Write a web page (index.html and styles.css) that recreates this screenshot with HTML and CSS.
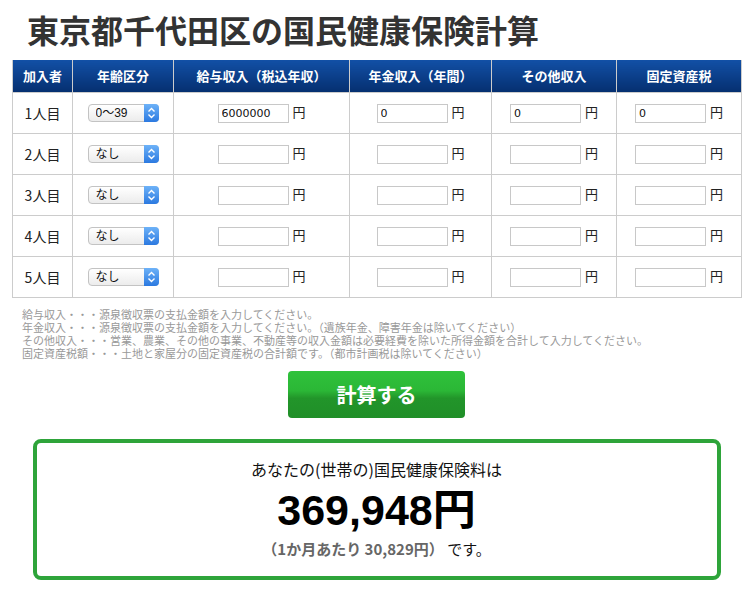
FILE: index.html
```html
<html>

<head>
    <meta http-equiv="Content-Type" content="text/html; charset=utf-8">
    <title>東京都千代田区の国民健康保険計算</title>

    <link rel="stylesheet" href="styles.css">
</head>

<body>
    <div class="wrap">
        <h1>東京都千代田区の国民健康保険計算</h1>

        <table class="calc">
            <colgroup>
                <col style="width: 60px">
                <col style="width: 101px">
                <col style="width: 176px">
                <col style="width: 142px">
                <col style="width: 125px">
                <col style="width: 125px">
            </colgroup>
            <thead>
                <tr>
                    <th>加入者</th>
                    <th>年齢区分</th>
                    <th>給与収入（税込年収）</th>
                    <th>年金収入（年間）</th>
                    <th>その他収入</th>
                    <th>固定資産税</th>
                </tr>
            </thead>
            <tbody id="rows"></tbody>
        </table>

        <div class="notes">
            <span>給与収入・・・源泉徴収票の支払金額を入力してください。</span>
            <span>年金収入・・・源泉徴収票の支払金額を入力してください。（遺族年金、障害年金は除いてください）</span>
            <span>その他収入・・・営業、農業、その他の事業、不動産等の収入金額は必要経費を除いた所得金額を合計して入力してください。</span>
            <span>固定資産税額・・・土地と家屋分の固定資産税の合計額です。（都市計画税は除いてください）</span>
        </div>

        <div class="action">
            <button class="btn-calc" onclick="calc()">計算する</button>
        </div>

        <div class="result">
            <p class="result-lead">あなたの(世帯の)国民健康保険料は</p>
            <p class="result-total"><span id="total">369,948</span>円</p>
            <p class="result-month"><b>（1か月あたり <span id="month">30,829</span>円）</b> です。</p>
        </div>
    </div>

    <script type="text/javascript">
        var members = [
            { age: '0〜39', salary: '6000000', pension: '0', other: '0', tax: '0' },
            { age: 'なし', salary: '', pension: '', other: '', tax: '' },
            { age: 'なし', salary: '', pension: '', other: '', tax: '' },
            { age: 'なし', salary: '', pension: '', other: '', tax: '' },
            { age: 'なし', salary: '', pension: '', other: '', tax: '' }
        ];

        var ages = ['なし', '0〜39', '40〜64', '65〜74'];

        // 円マークの付いた入力欄
        var yen = function (name, value) {
            return '<input type="text" class="num" name="' + name + '" value="' + value + '"> 円';
        };

        var html = '';
        for (var i = 0; i < members.length; i++) {
            var m = members[i];
            var opts = '';
            for (var j = 0; j < ages.length; j++) {
                opts += '<option' + (ages[j] == m.age ? ' selected' : '') + '>' + ages[j] + '</option>';
            }
            html += '<tr>'
                + '<td>' + (i + 1) + '人目</td>'
                + '<td><span class="age"><select>' + opts + '</select>'
                + '<span class="age-arrow"><svg width="15" height="18" viewBox="0 0 15 18">'
                + '<path d="M4.5 7.5 L7.5 4.5 L10.5 7.5 M4.5 10.5 L7.5 13.5 L10.5 10.5" fill="none" stroke="#fff" stroke-width="1.4"/>'
                + '</svg></span></span></td>'
                + '<td>' + yen('salary', m.salary) + '</td>'
                + '<td>' + yen('pension', m.pension) + '</td>'
                + '<td>' + yen('other', m.other) + '</td>'
                + '<td>' + yen('tax', m.tax) + '</td>'
                + '</tr>';
        }
        document.getElementById('rows').innerHTML = html;

        function calc() {
            // 計算結果はサーバ側で出す想定
            console.log('calc');
        }
    </script>
</body>

</html>
```

FILE: styles.css
```css
body {
    margin: 0;
    padding: 9px 0 0;
    font-family: "Liberation Sans", "Noto Sans CJK JP", sans-serif;
    color: #222;
    background: #fff;
}

.wrap {
    width: 729px;
    margin-left: 12px;
}

h1 {
    margin: 0 0 11px;
    padding-left: 15px;
    font-size: 32px;
    line-height: 40px;
    font-weight: bold;
    color: #333;
    font-family: "Noto Sans CJK JP", sans-serif;
}

.calc {
    width: 729px;
    border-collapse: collapse;
    table-layout: fixed;
}

.calc th {
    height: 32px;
    padding: 0;
    background: linear-gradient(#1250a6, #052f70);
    color: #fff;
    font-size: 13px;
    font-weight: bold;
    border: 1px solid #ccc;
    border-top: 0;
    font-family: "Noto Sans CJK JP", sans-serif;
}

.calc td {
    height: 41px;
    padding: 0;
    border: 1px solid #ccc;
    text-align: center;
    font-size: 13px;
    white-space: nowrap;
    font-family: "Noto Sans CJK JP", sans-serif;
}

.calc td:first-child {
    font-size: 14px;
}

.age {
    position: relative;
    display: inline-block;
    vertical-align: middle;
}

.age select {
    -webkit-appearance: none;
    appearance: none;
    display: block;
    width: 71px;
    height: 18px;
    margin: 0;
    padding: 0 0 0 7px;
    border: 1px solid #c3c3c3;
    border-radius: 4px;
    background: linear-gradient(#fff, #ececec);
    font-size: 12px;
    color: #111;
    font-family: "Liberation Sans", "Noto Sans CJK JP", sans-serif;
}

.age-arrow {
    position: absolute;
    top: 0;
    right: 0;
    width: 15px;
    height: 18px;
    border-radius: 0 4px 4px 0;
    background: linear-gradient(#6db2f8, #2b79e0);
    pointer-events: none;
}

.age-arrow svg {
    display: block;
}

.num {
    width: 71px;
    height: 19px;
    box-sizing: border-box;
    margin: 0 1px 0 0;
    padding: 0 3px;
    border: 1px solid #c8c8c8;
    font-size: 11px;
    font-family: "DejaVu Sans", sans-serif;
    color: #111;
    vertical-align: middle;
}

.notes {
    margin: 11px 0 0;
    padding-left: 10px;
    font-size: 11px;
    line-height: 13px;
    color: #999;
    font-family: "Liberation Sans", "Noto Sans CJK JP", sans-serif;
}

.notes span {
    display: block;
}

.action {
    margin-top: 10px;
    text-align: center;
}

.btn-calc {
    width: 177px;
    height: 47px;
    border: 0;
    border-radius: 4px;
    background: linear-gradient(#2fc23b 0%, #2bb736 42%, #22952a 58%, #208f28 100%);
    color: #fff;
    font-size: 20px;
    font-weight: bold;
    font-family: "Noto Sans CJK JP", sans-serif;
    cursor: pointer;
}

.result {
    width: 688px;
    box-sizing: border-box;
    margin: 21px auto 0;
    padding: 14px 0 16px;
    border: 4px solid #2ea43a;
    border-radius: 8px;
    text-align: center;
    font-family: "Noto Sans CJK JP", sans-serif;
}

.result p {
    margin: 0;
}

.result-lead {
    font-size: 16px;
    line-height: 24px;
    color: #111;
}

.result-total {
    margin-top: 5px !important;
    font-size: 43px;
    line-height: 48px;
    font-weight: bold;
    color: #000;
    font-family: "Liberation Sans", "Noto Sans CJK JP", sans-serif;
}

.result-month {
    margin-top: 4px !important;
    font-size: 15px;
    line-height: 22px;
    color: #111;
}

.result-month b {
    color: #666;
}
```
